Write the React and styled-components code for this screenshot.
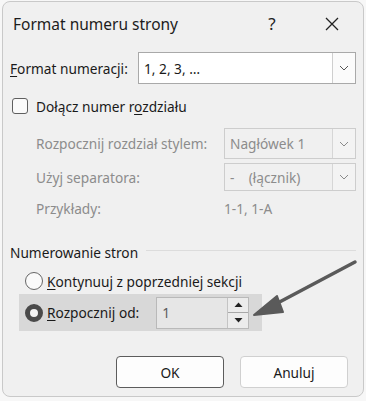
import React from 'react';
import styled, { createGlobalStyle } from 'styled-components';

const GlobalStyle = createGlobalStyle`
  html, body {
    margin: 0;
    padding: 0;
    background: #f7f7f7;
  }
  body {
    font-family: 'Noto Sans', 'Open Sans', sans-serif;
    color: #1a1a1a;
  }
`;

const Stage = styled.div`
  position: relative;
  width: 366px;
  height: 401px;
  padding: 1px 2px 4px 2px;
  box-sizing: border-box;
`;

const Dialog = styled.div`
  width: 362px;
  height: 396px;
  box-sizing: border-box;
  background: #f0f0f0;
  border: 1px solid #c9c9c9;
  border-radius: 8px;
  display: flex;
  flex-direction: column;
`;

const TitleBar = styled.div`
  height: 43px;
  display: flex;
  align-items: center;
  padding-left: 10px;
`;

const Title = styled.div`
  flex: 1;
  font-size: 15.5px;
  color: #1c1c1c;
`;

const TitleButton = styled.div`
  width: 46px;
  height: 40px;
  display: flex;
  align-items: center;
  justify-content: center;
  font-size: 17px;
  color: #222;
  margin-right: ${({ $gap }) => $gap || 0}px;
`;

const Body = styled.div`
  display: flex;
  flex-direction: column;
  padding: 0 7px 0 7px;
`;

const Row = styled.div`
  display: flex;
  align-items: center;
  height: ${({ $h }) => $h}px;
  margin-top: ${({ $mt }) => $mt || 0}px;
  padding-left: ${({ $indent }) => $indent || 0}px;
`;

const Label = styled.div`
  font-size: 13.7px;
  color: ${({ $disabled }) => ($disabled ? '#8c8c8c' : '#1a1a1a')};
  width: ${({ $w }) => ($w ? `${$w}px` : 'auto')};
  flex-shrink: 0;
  white-space: nowrap;
`;

const U = styled.span`
  text-decoration: underline;
  text-underline-offset: 2px;
`;

const Select = styled.div`
  flex: 1;
  height: 100%;
  box-sizing: border-box;
  display: flex;
  align-items: stretch;
  background: ${({ $disabled }) => ($disabled ? '#f0f0f0' : '#ffffff')};
  border: 1px solid ${({ $disabled }) => ($disabled ? '#cdcdcd' : '#a9a9a9')};
`;

const SelectValue = styled.div`
  flex: 1;
  display: flex;
  align-items: center;
  padding-left: 5px;
  font-size: 13.7px;
  color: ${({ $disabled }) => ($disabled ? '#8c8c8c' : '#1a1a1a')};
  white-space: pre;
`;

const DropButton = styled.div`
  width: 22px;
  display: flex;
  align-items: center;
  justify-content: center;
  border-left: 1px solid ${({ $disabled }) => ($disabled ? '#d6d6d6' : '#cfcfcf')};
  background: ${({ $disabled }) => ($disabled ? '#f3f3f3' : '#fbfbfb')};
`;

const CheckBox = styled.div`
  width: 16px;
  height: 16px;
  box-sizing: border-box;
  border: 1px solid #5f5f5f;
  border-radius: 3px;
  background: #fafafa;
  margin: 0 8px 0 2px;
`;

const Group = styled.div`
  display: flex;
  align-items: center;
  margin-top: 24px;
  height: 20px;
  gap: 8px;
`;

const GroupLine = styled.div`
  flex: 1;
  height: 1px;
  background: #dcdcdc;
  margin-top: -4px;
`;

const RadioRow = styled.div`
  display: flex;
  align-items: center;
  height: ${({ $h }) => $h}px;
  margin-top: ${({ $mt }) => $mt || 0}px;
  margin-left: 9px;
  padding-left: 6px;
  width: ${({ $w }) => ($w ? `${$w}px` : 'auto')};
  background: ${({ $active }) => ($active ? '#d8d8d8' : 'transparent')};
`;

const Radio = styled.div`
  width: 18px;
  height: 18px;
  box-sizing: border-box;
  border-radius: 50%;
  border: ${({ $checked }) => ($checked ? '5px solid #4a4a4a' : '1px solid #666')};
  background: ${({ $checked }) => ($checked ? '#f2f2f2' : '#fafafa')};
  margin-right: 4px;
  flex-shrink: 0;
`;

const Spinner = styled.div`
  margin-left: 17px;
  width: 93px;
  height: 32px;
  box-sizing: border-box;
  border: 1px solid #b9b9b9;
  background: #e6e6e6;
  display: flex;
`;

const SpinValue = styled.div`
  flex: 1;
  font-size: 13.7px;
  color: #5a5a5a;
  display: flex;
  align-items: center;
  padding-left: 5px;
`;

const SpinButtons = styled.div`
  width: 20px;
  display: flex;
  flex-direction: column;
  border-left: 1px solid #c4c4c4;
`;

const SpinButton = styled.div`
  flex: 1;
  display: flex;
  align-items: center;
  justify-content: center;
  background: #ececec;
  border-top: ${({ $bottom }) => ($bottom ? '1px solid #a8a8a8' : 'none')};
`;

const Footer = styled.div`
  display: flex;
  justify-content: flex-end;
  gap: 16px;
  margin-top: 25px;
  padding-right: 8px;
`;

const Button = styled.div`
  width: 108px;
  height: 32px;
  box-sizing: border-box;
  border-radius: 4px;
  background: #fdfdfd;
  border: 1px solid ${({ $primary }) => ($primary ? '#5c5c5c' : '#d0d0d0')};
  display: flex;
  align-items: center;
  justify-content: center;
  font-size: 13.7px;
  color: #1a1a1a;
`;

const Arrow = styled.svg`
  position: absolute;
  left: 0;
  top: 0;
  pointer-events: none;
`;

const Chevron = ({ color }) => (
  <svg width="10" height="6" viewBox="0 0 10 6">
    <path d="M1 1 L5 5 L9 1" fill="none" stroke={color} strokeWidth="1" />
  </svg>
);

const Tri = ({ up }) => (
  <svg width="9" height="5" viewBox="0 0 9 5">
    <path d={up ? 'M0.5 5 L4.5 0.5 L8.5 5 Z' : 'M0.5 0 L4.5 4.5 L8.5 0 Z'} fill="#222" />
  </svg>
);

export default function App() {
  return (
    <Stage>
      <GlobalStyle />
      <Dialog>
        <TitleBar>
          <Title>Format numeru strony</Title>
          <TitleButton $gap={14}>?</TitleButton>
          <TitleButton $gap={8}>
            <svg width="14" height="14" viewBox="0 0 14 14">
              <path d="M1 1 L13 13 M13 1 L1 13" stroke="#222" strokeWidth="1.3" />
            </svg>
          </TitleButton>
        </TitleBar>
        <Body>
          <Row $h={32} $mt={7}>
            <Label $w={128}>
              <U>F</U>ormat numeracji:
            </Label>
            <Select>
              <SelectValue>1, 2, 3, …</SelectValue>
              <DropButton>
                <Chevron color="#555" />
              </DropButton>
            </Select>
          </Row>
          <Row $h={18} $mt={13}>
            <CheckBox />
            <Label>
              Dołącz numer r<U>o</U>zdziału
            </Label>
          </Row>
          <Row $h={31} $mt={13} $indent={26}>
            <Label $w={188} $disabled>
              Rozpocznij rozdział stylem:
            </Label>
            <Select $disabled>
              <SelectValue $disabled>Nagłówek 1</SelectValue>
              <DropButton $disabled>
                <Chevron color="#8a8a8a" />
              </DropButton>
            </Select>
          </Row>
          <Row $h={28} $mt={4} $indent={26}>
            <Label $w={188} $disabled>
              Użyj separatora:
            </Label>
            <Select $disabled>
              <SelectValue $disabled>{'-    (łącznik)'}</SelectValue>
              <DropButton $disabled>
                <Chevron color="#8a8a8a" />
              </DropButton>
            </Select>
          </Row>
          <Row $h={20} $mt={7} $indent={26}>
            <Label $w={188} $disabled>
              Przykłady:
            </Label>
            <Label $disabled>1-1, 1-A</Label>
          </Row>
          <Group>
            <Label>Numerowanie stron</Label>
            <GroupLine />
          </Group>
          <RadioRow $h={22} $mt={8}>
            <Radio />
            <Label>
              <U>K</U>ontynuuj z poprzedniej sekcji
            </Label>
          </RadioRow>
          <RadioRow $h={37} $mt={2} $w={237} $active>
            <Radio $checked />
            <Label>
              <U>R</U>ozpocznij od:
            </Label>
            <Spinner>
              <SpinValue>1</SpinValue>
              <SpinButtons>
                <SpinButton>
                  <Tri up />
                </SpinButton>
                <SpinButton $bottom>
                  <Tri />
                </SpinButton>
              </SpinButtons>
            </Spinner>
          </RadioRow>
          <Footer>
            <Button $primary>OK</Button>
            <Button>Anuluj</Button>
          </Footer>
        </Body>
      </Dialog>
      <Arrow width="366" height="401" viewBox="0 0 366 401">
        <path d="M355 262 L272 306" stroke="#5a5a5a" strokeWidth="3.5" strokeLinecap="round" />
        <path d="M254 315 L277 296 L283 312 Z" fill="#5a5a5a" stroke="#5a5a5a" strokeWidth="2" strokeLinejoin="round" />
      </Arrow>
    </Stage>
  );
}
